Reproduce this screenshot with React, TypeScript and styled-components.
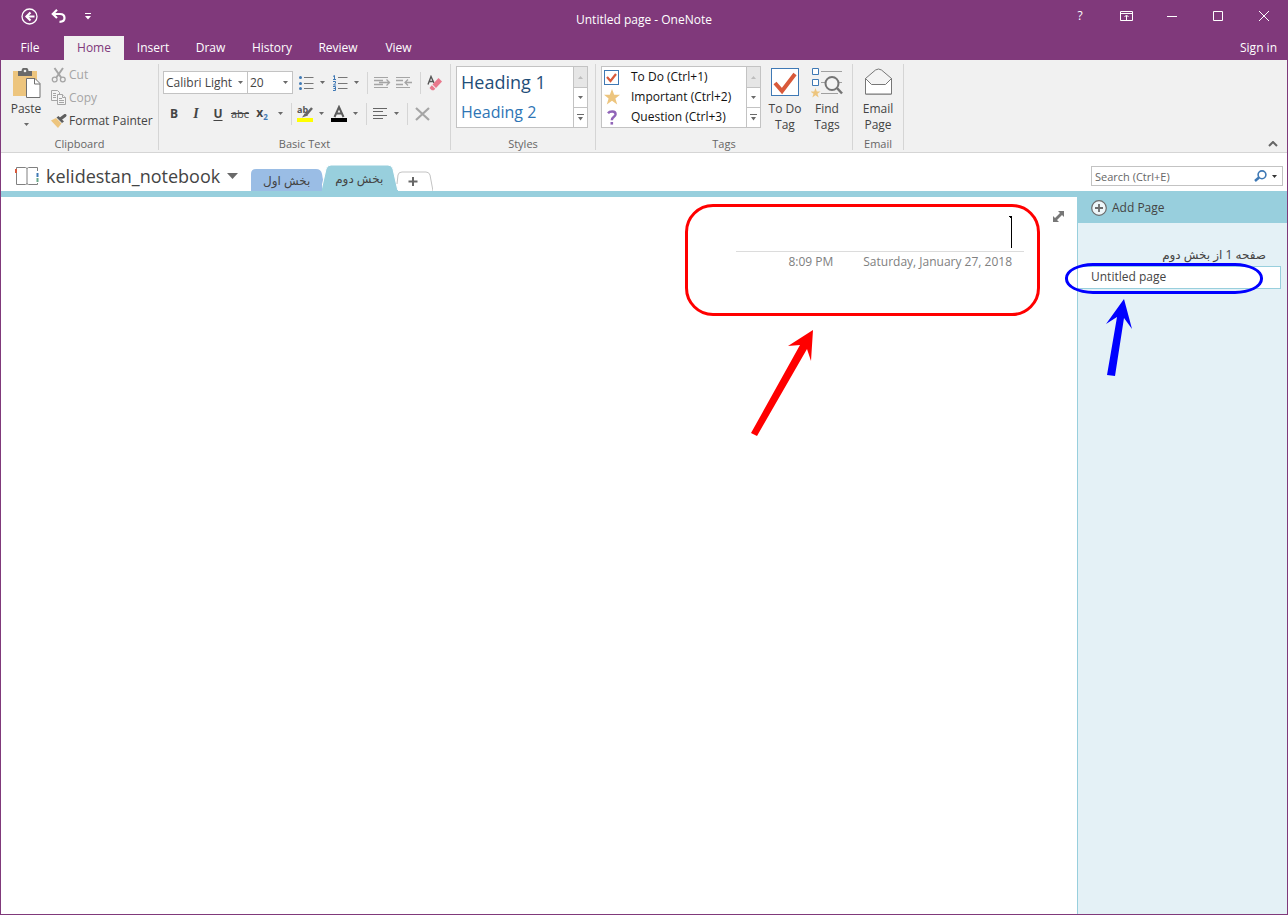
import React from "react";
import styled, { createGlobalStyle, css } from "styled-components";

const color = {
  purple: "#80397b",
  ribbon: "#f1f1f1",
  line: "#d5d5d5",
  box: "#c3c3c3",
  text: "#444444",
  muted: "#a5a5a5",
  label: "#666666",
  icon: "#6a6a6a",
  teal: "#98cfdd",
  pane: "#e4f1f6",
  blue: "#3f79b5",
  sand: "#edc57e",
  coral: "#d9593a",
};

const GlobalStyle = createGlobalStyle`
  *, *::before, *::after { box-sizing: border-box; }
  body {
    margin: 0;
    color: ${color.text};
    font: 12px/16px "Open Sans", "DejaVu Sans", sans-serif;
  }
  button, input, select { font: inherit; color: inherit; }
  button { margin: 0; padding: 0; border: 0; background: none; cursor: pointer; }
  ul { list-style: none; margin: 0; padding: 0; }
  svg { display: block; flex: none; }
`;

const Window = styled.div`
  display: flex;
  flex-direction: column;
  min-height: 100vh;
  border: 1px solid ${color.purple};
  border-top: 0;
  background: #fff;
`;

/* Title bar and ribbon tabs */

const TitleBar = styled.header`
  display: grid;
  grid-template-columns: 1fr auto 1fr;
  height: 36px;
  background: ${color.purple};
  color: #fff;
`;

const QuickAccess = styled.div`
  display: flex;
  align-items: center;
  height: 32px;
  padding-left: 14px;
`;

const QuickButton = styled.button`
  display: flex;
  align-items: center;
  justify-content: center;
  width: 29px;
  height: 28px;
`;

const WindowTitle = styled.h1`
  margin: 0;
  padding-top: 4px;
  font-size: 12px;
  line-height: 32px;
  font-weight: 400;
`;

const WindowControls = styled.div`
  display: flex;
  justify-content: flex-end;
  height: 32px;
`;

const ControlButton = styled.button`
  display: flex;
  align-items: center;
  justify-content: center;
  width: 46px;
  color: #fff;
`;

const TabRow = styled.nav`
  display: flex;
  height: 24px;
  background: ${color.purple};
`;

const RibbonTab = styled.button<{ $width: number; $active?: boolean; $gap?: number }>`
  width: ${(p) => p.$width}px;
  margin-right: ${(p) => p.$gap || 0}px;
  color: #fff;
  ${(p) =>
    p.$active &&
    css`
      background: ${color.ribbon};
      color: ${color.purple};
    `}
`;

const SignIn = styled.button`
  margin-left: auto;
  padding: 0 10px;
  color: #fff;
`;

/* Ribbon */

const Ribbon = styled.section`
  display: flex;
  height: 93px;
  padding-top: 4px;
  border-bottom: 1px solid ${color.line};
  background: ${color.ribbon};
`;

const Group = styled.div<{ $width: number; $inset: number }>`
  display: flex;
  flex-direction: column;
  justify-content: space-between;
  width: ${(p) => p.$width}px;
  height: 86px;
  padding: 2px ${(p) => p.$inset}px 0;
  border-right: 1px solid ${color.line};
`;

const GroupBody = styled.div`
  display: flex;
`;

const GroupLabel = styled.div`
  color: ${color.label};
  font-size: 11px;
  line-height: 12px;
  text-align: center;
`;

const BigButton = styled.button<{ $width: number }>`
  display: flex;
  flex-direction: column;
  align-items: center;
  width: ${(p) => p.$width}px;
  padding-top: 2px;
`;

const BigIcon = styled.span`
  display: block;
  height: 33px;
`;

const BigArrow = styled.span`
  padding-top: 6px;
`;

const ClipboardList = styled.div`
  display: flex;
  flex-direction: column;
  margin-left: 4px;
`;

const SmallButton = styled.button`
  display: flex;
  align-items: center;
  gap: 2px;
  height: 23px;
  padding-bottom: 6px;
  white-space: nowrap;
  &:disabled {
    color: ${color.muted};
    cursor: default;
  }
`;

const ToolRows = styled.div`
  display: flex;
  flex-direction: column;
  gap: 8px;
  padding-top: 5px;
`;

const ToolRow = styled.div`
  display: flex;
  align-items: center;
  gap: 4px;
  height: 23px;
`;

const Cluster = styled.div<{ $gap?: number }>`
  display: flex;
  align-items: center;
  gap: ${(p) => p.$gap || 0}px;
`;

const Divider = styled.span`
  width: 1px;
  height: 22px;
  background: ${color.line};
`;

const ToolButton = styled.button<{ $width?: number }>`
  display: flex;
  align-items: center;
  justify-content: center;
  width: ${(p) => p.$width || 22}px;
  height: 22px;
`;

const Glyph = styled.span<{ $kind: "bold" | "italic" | "underline" | "strike" | "sub" }>`
  font-size: ${(p) => (p.$kind === "strike" ? 11 : 12)}px;
  font-weight: ${(p) => (p.$kind === "strike" ? 400 : 700)};
  ${(p) => p.$kind === "italic" && `font-family: "Liberation Serif", serif; font-style: italic; font-size: 14px;`}
  ${(p) => p.$kind === "underline" && `text-decoration: underline; text-underline-offset: 2px;`}
  ${(p) => p.$kind === "strike" && `text-decoration: line-through;`}
  sub {
    color: ${color.blue};
    font-size: 8px;
    line-height: 8px;
  }
`;

const SelectBox = styled.span<{ $width: number }>`
  display: flex;
  align-items: center;
  width: ${(p) => p.$width}px;
  height: 23px;
  padding-right: 4px;
  border: 1px solid ${color.box};
  background: #fff;
  & + & {
    margin-left: -1px;
  }
`;

const PlainSelect = styled.select`
  flex: 1;
  min-width: 0;
  height: 21px;
  padding: 0 0 0 2px;
  border: 0;
  outline: 0;
  background: transparent;
  appearance: none;
`;

const Gallery = styled.div<{ $width: number }>`
  display: flex;
  width: ${(p) => p.$width}px;
  height: 62px;
  border: 1px solid ${color.box};
  background: #fff;
`;

const GalleryItems = styled.ul`
  flex: 1;
  display: flex;
  flex-direction: column;
`;

const GalleryScroll = styled.div`
  display: grid;
  grid-template-rows: repeat(3, 1fr);
  width: 14px;
  border-left: 1px solid ${color.box};
`;

const ScrollButton = styled.button`
  display: flex;
  align-items: center;
  justify-content: center;
  & + & {
    border-top: 1px solid ${color.box};
  }
  &:disabled {
    background: #e6e6e6;
  }
`;

const StyleItem = styled.button<{ $level: 1 | 2 }>`
  height: 30px;
  padding-left: 4px;
  font-size: ${(p) => (p.$level === 1 ? 18 : 16)}px;
  line-height: 30px;
  color: ${(p) => (p.$level === 1 ? "#1f4e79" : "#2e75b5")};
`;

const TagItem = styled.button`
  display: grid;
  grid-template-columns: 27px auto;
  align-items: center;
  height: 20px;
  padding-left: 2px;
  color: #111;
  white-space: nowrap;
`;

const CollapseButton = styled.button`
  align-self: flex-end;
  margin-left: auto;
  padding: 5px 9px;
`;

/* Notebook bar */

const NotebookBar = styled.div`
  display: flex;
  align-items: flex-end;
  height: 38px;
  padding: 0 4px 0 14px;
`;

const NotebookButton = styled.button`
  display: flex;
  align-items: center;
  gap: 7px;
  height: 30px;
  margin-right: 13px;
  font-size: 18px;
  line-height: 26px;
`;

const SectionTabs = styled.div`
  display: flex;
  align-items: flex-end;
`;

const SectionTab = styled.button<{ $width: number; $height: number }>`
  position: relative;
  width: ${(p) => p.$width}px;
  height: ${(p) => p.$height}px;
  & > svg {
    position: absolute;
    left: 0;
    bottom: 0;
  }
  & > span {
    position: relative;
    display: flex;
    justify-content: center;
    padding-top: 2px;
  }
`;

const SearchBox = styled.label`
  display: flex;
  align-items: center;
  gap: 5px;
  width: 192px;
  height: 20px;
  margin: 0 0 5px auto;
  padding-right: 5px;
  border: 1px solid ${color.box};
`;

const SearchInput = styled.input`
  flex: 1;
  min-width: 0;
  height: 18px;
  padding: 0 0 0 3px;
  border: 0;
  outline: 0;
  background: transparent;
  font-size: 11px;
  &::placeholder {
    color: ${color.label};
    opacity: 1;
  }
`;

/* Page and page list */

const Workspace = styled.div`
  flex: 1;
  display: flex;
  border-top: 6px solid ${color.teal};
`;

const Page = styled.main`
  flex: 1;
  display: flex;
  align-items: flex-start;
  justify-content: flex-end;
  padding: 14px 13px 0 0;
`;

const TitleBlock = styled.div`
  position: relative;
  width: 288px;
  margin-right: 29px;
`;

const TitleField = styled.div`
  display: flex;
  align-items: center;
  height: 41px;
  padding: 5px 12px 3px 0;
  border-bottom: 1px solid #dcdcdc;
`;

const TitleInput = styled.input`
  flex: 1;
  min-width: 0;
  height: 32px;
  padding: 0;
  border: 0;
  outline: 0;
  background: transparent;
  font-size: 20px;
  text-align: right;
`;

const Stamp = styled.div`
  display: flex;
  justify-content: flex-end;
  gap: 30px;
  padding: 2px 12px 0 0;
  color: #808080;
`;

const PageList = styled.aside`
  width: 210px;
  border-left: 1px solid ${color.teal};
  background: ${color.pane};
`;

const AddPage = styled.button`
  display: flex;
  align-items: center;
  gap: 5px;
  width: 100%;
  height: 26px;
  padding: 0 0 4px 13px;
  background: ${color.teal};
`;

const Pages = styled.ul`
  padding: 22px 6px 0 0;
`;

const PageItem = styled.li<{ $current?: boolean }>`
  position: relative;
  height: ${(p) => (p.$current ? 23 : 21)}px;
  ${(p) =>
    p.$current &&
    css`
      border: 1px solid ${color.teal};
      border-left: 0;
      background: #fff;
    `}
`;

const PageLink = styled.a`
  display: block;
  padding: 2px 15px 0 13px;
  color: ${color.text};
  text-decoration: none;
`;

/* Markup drawn over the page */

const Outline = styled.span<{ $tone: "red" | "blue" }>`
  position: absolute;
  border: 3px solid ${(p) => (p.$tone === "red" ? "#ff0000" : "#0000ff")};
  pointer-events: none;
  ${(p) =>
    p.$tone === "red"
      ? css`
          left: -51px;
          top: -7px;
          width: 355px;
          height: 112px;
          border-radius: 28px;
        `
      : css`
          left: -13px;
          top: -4px;
          width: 198px;
          height: 31px;
          border-radius: 28px / 15px;
        `}
`;

const Arrow = styled.svg<{ $left: number; $top: number }>`
  position: absolute;
  left: ${(p) => p.$left}px;
  top: ${(p) => p.$top}px;
  pointer-events: none;
`;

/* Icons */

const Caret = ({ size = 5, fill = color.icon }: { size?: number; fill?: string }) => (
  <svg width={size} height={Math.ceil(size / 2)} viewBox="0 0 10 6" preserveAspectRatio="none" aria-hidden="true">
    <path d="M0 0h10L5 6z" fill={fill} />
  </svg>
);

const BackIcon = () => (
  <svg width="17" height="17" viewBox="0 0 17 17" fill="none" stroke="#fff" aria-hidden="true">
    <circle cx="8.500" cy="8.500" r="7.500" strokeWidth="1.300" />
    <path d="M13.500 8.500H5" strokeWidth="2" />
    <path d="M9.500 4.500 5.500 8.500l4 4" strokeWidth="2.200" />
  </svg>
);

const UndoIcon = () => (
  <svg width="15" height="14" viewBox="0 0 15 14" fill="none" stroke="#fff" strokeWidth="2.200" aria-hidden="true">
    <path d="M2 5h7c3 0 4.500 1.500 4.500 4s-2 3.800-5 3.800" />
    <path d="M6 .8 1.800 5 6 9" />
  </svg>
);

const CustomizeIcon = () => (
  <svg width="6" height="7" viewBox="0 0 6 7" aria-hidden="true">
    <path d="M0 0h6v1H0zM0 3h6L3 6.500z" fill="#fff" />
  </svg>
);

const RibbonDisplayIcon = () => (
  <svg width="13" height="10" viewBox="0 0 13 10" fill="none" stroke="#fff" aria-hidden="true">
    <path d="M.5.5h12v9H.5zM.5 2.500h12M6.500 9V4.500M4.500 6l2-2 2 2" />
  </svg>
);

const PasteIcon = () => (
  <svg width="29" height="30" viewBox="0 0 29 30" aria-hidden="true">
    <path d="M1 3h24v25H1z" fill={color.sand} />
    <path d="M6 3h3.500a3.500 3.500 0 0 1 7 0H20v5H6z" fill="#6a6a6a" />
    <circle cx="13" cy="3" r="1.300" fill="#f1f1f1" />
    <path d="M14.500 10.500h8.500l5 5v14H14.500z" fill="#fff" stroke="#707070" />
    <path d="M22.500 10.500v5.500H28" fill="none" stroke="#707070" />
  </svg>
);

const CutIcon = () => (
  <svg width="16" height="16" viewBox="0 0 16 16" fill="none" stroke={color.muted} aria-hidden="true">
    <path d="M3.500 1 10.500 11M12 1 5 11" strokeWidth="2" />
    <circle cx="3.700" cy="12.500" r="2.400" strokeWidth="1.300" />
    <circle cx="11.800" cy="12.500" r="2.400" strokeWidth="1.300" />
  </svg>
);

const CopyIcon = () => (
  <svg width="16" height="15" viewBox="0 0 16 15" fill="#f4f4f4" stroke={color.muted} aria-hidden="true">
    <path d="M.5.5h6l2 2v8h-8z" />
    <path d="M2 3.500h3M2 5.500h3M2 7.500h3" />
    <path d="M6.500 4.500h5l3 3v7h-8z" />
    <path d="M11.500 4.500v3h3M8 8.500h3M8 10.500h5M8 12.500h5" />
  </svg>
);

const PainterIcon = () => (
  <svg width="16" height="14" viewBox="0 0 16 14" aria-hidden="true">
    <path d="M0 6.500 5 4l5.500 5.500L7 14z" fill={color.sand} />
    <path d="m5.500 3.500 2-1.500 5.500 5.500-2 1.500z" fill="#5e5e5e" />
    <path d="m10 4.500 4-3" stroke="#5e5e5e" strokeWidth="3" strokeLinecap="round" />
  </svg>
);

const ListIcon = ({ numbered }: { numbered?: boolean }) => (
  <svg width="15" height="16" viewBox="0 0 15 16" aria-hidden="true">
    <path d="M5 2.500h9.500M5 8.500h9.500M5 13.500h9.500" stroke="#777" />
    {numbered ? (
      <path
        d="M0 1.500 1.500.5v4M0 4.500h3M0 6.500h2.500v1.500L.5 10H3M0 11.500h2.500v4H0M.5 13.500h2"
        fill="none"
        stroke={color.blue}
      />
    ) : (
      <g fill={color.blue}>
        <circle cx="1.500" cy="2.500" r="1.500" />
        <circle cx="1.500" cy="8.500" r="1.500" />
        <circle cx="1.500" cy="13.500" r="1.500" />
      </g>
    )}
  </svg>
);

const IndentIcon = ({ back }: { back?: boolean }) => (
  <svg width="17" height="11" viewBox="0 0 17 11" fill="none" stroke={color.muted} aria-hidden="true">
    <path d="M0 .5h14M0 10.500h14" />
    {back ? (
      <path d="M0 3.500h7M0 7.500h7M16 5.500H9M12 2.500l-3 3 3 3" strokeWidth="1.300" />
    ) : (
      <path d="M0 3.500h9M0 7.500h9M5 5.500h11M12.500 2.500l3 3-3 3" strokeWidth="1.300" />
    )}
  </svg>
);

const EraserIcon = () => (
  <svg width="16" height="16" viewBox="0 0 16 16" aria-hidden="true">
    <path d="M1 9.500 4 1.500 7 8M2 6.500h4" fill="none" stroke="#555" strokeWidth="1.400" />
    <path d="M11.500 3 15 6.500 9 13 5.500 9.500z" fill="#e8788c" />
    <path d="m4.800 10.200 3.500 3.500-1.500 1.500H4.800L2.500 13z" fill="#e8788c" />
  </svg>
);

const HighlightIcon = () => (
  <svg width="17" height="22" viewBox="0 -2 17 22" aria-hidden="true">
    <text x="0" y="8" fontSize="9" fontWeight="700" fill="#555">
      ab
    </text>
    <path d="m15 3-6 7" stroke="#666" strokeWidth="2.500" />
    <path d="m8 8 3 2.500L5 12.500z" fill="#666" />
    <path d="M0 13h16v4H0z" fill="#ffff00" />
  </svg>
);

const FontColorIcon = () => (
  <svg width="16" height="18" viewBox="0 0 16 18" aria-hidden="true">
    <path d="M3.500 12 8 2 12.500 12M5 8.500h6" fill="none" stroke="#5c5c5c" strokeWidth="2" />
    <path d="M0 13h16v4H0z" fill="#000" />
  </svg>
);

const AlignIcon = () => (
  <svg width="14" height="11" viewBox="0 0 14 11" stroke="#666" aria-hidden="true">
    <path d="M0 .5h14M0 3.500h10M0 7.500h14M0 10.500h10" />
  </svg>
);

const DeleteIcon = () => (
  <svg width="16" height="14" viewBox="0 0 16 14" stroke={color.muted} strokeWidth="2.200" aria-hidden="true">
    <path d="m1 1 13 12M14 1 1 13" />
  </svg>
);

const CheckTagIcon = ({ size }: { size: number }) => (
  <svg width={size} height={size} viewBox={`0 0 ${size} ${size}`} aria-hidden="true">
    <rect x=".5" y=".5" width={size - 1} height={size - 1} fill="#fff" stroke={color.blue} />
    {size > 20 ? (
      <path d="m4 15 7 8L24 6" fill="none" stroke={color.coral} strokeWidth="4" />
    ) : (
      <path d="m3 7 3.500 4L12 4" fill="none" stroke={color.coral} strokeWidth="2.200" />
    )}
  </svg>
);

const StarIcon = () => (
  <svg width="16" height="16" viewBox="0 0 16 16" fill={color.sand} aria-hidden="true">
    <path d="m8 0 2.200 5.800H16l-4.600 3.600L13.200 15.500 8 11.800 2.800 15.500l1.800-6.100L0 5.800h5.800z" />
  </svg>
);

const QuestionIcon = () => (
  <svg width="15" height="15" viewBox="0 0 15 15" aria-hidden="true">
    <path d="M4 3.200C5.500 1.200 11.600.5 11.600 4.200c0 2.600-3.800 2.600-3.800 6" fill="none" stroke="#9064b8" strokeWidth="2.400" />
    <path d="M6.500 12h2.600v2.600H6.500z" fill="#9064b8" />
  </svg>
);

const FindTagsIcon = () => (
  <svg width="32" height="31" viewBox="0 0 32 31" fill="none" aria-hidden="true">
    <path d="M10 3.500h21M10 14.500h4M28 14.500h3M10 25.500h17" stroke="#a0a0a0" />
    <path d="M1.500.5h6v6h-6zM1.500 11.500h6v6h-6z" fill="#fff" stroke={color.blue} />
    <path d="m4.500 20 1.300 3.500h3.700l-3 2.300 1.200 3.700-3.200-2.200-3.200 2.200 1.200-3.700-3-2.300h3.700z" fill={color.sand} />
    <circle cx="21" cy="15.500" r="6.500" fill="#f4f4f4" stroke="#757575" strokeWidth="2" />
    <path d="m26 20 5 5.500" stroke="#757575" strokeWidth="2.500" />
  </svg>
);

const EmailIcon = () => (
  <svg width="27" height="27" viewBox="0 0 27 27" stroke="#777" aria-hidden="true">
    <path d="M.5 10.500 10.500 2q3-2 6 0l10 8.500v15.500H.5z" fill="#f4f4f4" />
    <path d="m.5 10.500 6 6h14l6-6v15.500H.5z" fill="#fff" />
  </svg>
);

const NotebookIcon = () => (
  <svg width="24" height="20" viewBox="0 0 24 20" fill="none" stroke="#808080" aria-hidden="true">
    <path d="M1.500 3V1.500h9l1.500 1 1.500-1h9V5M1.500 7v11.500h9l1.500-.7 1.500.7h9V17M12 2.500V18" />
    <path d="M1 3v4" stroke={color.coral} strokeWidth="2" />
    <path d="M22.500 7v4" stroke={color.blue} strokeWidth="2" />
    <path d="M22.500 12v4" stroke="#6aa88a" strokeWidth="2" />
  </svg>
);

const SearchIcon = () => (
  <svg width="13" height="12" viewBox="0 0 13 12" fill="none" stroke={color.blue} aria-hidden="true">
    <circle cx="8" cy="4.800" r="3.900" strokeWidth="1.600" />
    <path d="M5 7.500 1 11" strokeWidth="2.500" />
  </svg>
);

const AddIcon = () => (
  <svg width="16" height="16" viewBox="0 0 16 16" stroke="#6c6c6c" aria-hidden="true">
    <circle cx="8" cy="8" r="7.300" fill="#eef6f9" strokeWidth="1.200" />
    <path d="M4 8h8M8 4v8" strokeWidth="1.800" />
  </svg>
);

const ExpandIcon = () => (
  <svg width="11" height="11" viewBox="0 0 11 11" fill="#777" aria-hidden="true">
    <path d="M5 0h6v6L9 4 4 9l2 2H0V5l2 2 5-5z" />
  </svg>
);

const TextCursor = () => (
  <svg width="3" height="32" viewBox="0 0 3 32" aria-hidden="true">
    <path d="M0 0h3v32H2V2H1V1H0z" fill="#000" />
  </svg>
);

const Scroller = ({ name }: { name: string }) => (
  <GalleryScroll>
    <ScrollButton disabled aria-label={`${name}: previous row`}>
      <svg width="5" height="3" viewBox="0 0 5 3" aria-hidden="true">
        <path d="M0 3h5L2.500 0z" fill="#bdbdbd" />
      </svg>
    </ScrollButton>
    <ScrollButton aria-label={`${name}: next row`}>
      <Caret />
    </ScrollButton>
    <ScrollButton aria-label={`${name}: more`}>
      <svg width="7" height="7" viewBox="0 0 7 7" aria-hidden="true">
        <path d="M0 0h7v1H0zM1 3h5L3.500 6.500z" fill={color.icon} />
      </svg>
    </ScrollButton>
  </GalleryScroll>
);

const SplitTool = ({ name, width = 18, children }: { name: string; width?: number; children: React.ReactNode }) => (
  <Cluster>
    <ToolButton $width={width} aria-label={name}>
      {children}
    </ToolButton>
    <ToolButton $width={14} aria-label={`${name} options`}>
      <Caret />
    </ToolButton>
  </Cluster>
);

const tabs = [
  { name: "File", width: 58, gap: 5 },
  { name: "Home", width: 60, active: true },
  { name: "Insert", width: 58 },
  { name: "Draw", width: 57 },
  { name: "History", width: 66 },
  { name: "Review", width: 66 },
  { name: "View", width: 55 },
];

export default function App() {
  return (
    <>
      <GlobalStyle />
      <Window>
        <TitleBar>
          <QuickAccess>
            <QuickButton aria-label="Back"><BackIcon /></QuickButton>
            <QuickButton aria-label="Undo"><UndoIcon /></QuickButton>
            <QuickButton aria-label="Customize Quick Access Toolbar"><CustomizeIcon /></QuickButton>
          </QuickAccess>
          <WindowTitle>Untitled page - OneNote</WindowTitle>
          <WindowControls>
            <ControlButton aria-label="Help">?</ControlButton>
            <ControlButton aria-label="Ribbon display options"><RibbonDisplayIcon /></ControlButton>
            <ControlButton aria-label="Minimize">
              <svg width="10" height="1" aria-hidden="true"><path d="M0 0h10v1H0z" fill="#fff" /></svg>
            </ControlButton>
            <ControlButton aria-label="Maximize">
              <svg width="10" height="10" aria-hidden="true"><path d="M.5.5h9v9h-9z" fill="none" stroke="#fff" /></svg>
            </ControlButton>
            <ControlButton aria-label="Close">
              <svg width="10" height="10" aria-hidden="true"><path d="m0 0 10 10M10 0 0 10" stroke="#fff" /></svg>
            </ControlButton>
          </WindowControls>
        </TitleBar>

        <TabRow aria-label="Ribbon">
          {tabs.map((t) => (
            <RibbonTab key={t.name} $width={t.width} $active={t.active} $gap={t.gap}>{t.name}</RibbonTab>
          ))}
          <SignIn>Sign in</SignIn>
        </TabRow>

        <Ribbon>
          <Group $width={158} $inset={4}>
            <GroupBody>
              <BigButton $width={42}>
                <BigIcon><PasteIcon /></BigIcon>
                Paste
                <BigArrow><Caret /></BigArrow>
              </BigButton>
              <ClipboardList>
                <SmallButton disabled><CutIcon />Cut</SmallButton>
                <SmallButton disabled><CopyIcon />Copy</SmallButton>
                <SmallButton><PainterIcon />Format Painter</SmallButton>
              </ClipboardList>
            </GroupBody>
            <GroupLabel>Clipboard</GroupLabel>
          </Group>

          <Group $width={292} $inset={4}>
            <ToolRows>
              <ToolRow>
                <Cluster>
                  <SelectBox $width={85}>
                    <PlainSelect aria-label="Font" defaultValue="Calibri Light"><option>Calibri Light</option></PlainSelect>
                    <Caret />
                  </SelectBox>
                  <SelectBox $width={46}>
                    <PlainSelect aria-label="Font size" defaultValue="20"><option>20</option></PlainSelect>
                    <Caret />
                  </SelectBox>
                </Cluster>
                <Cluster $gap={2}>
                  <SplitTool name="Bullets"><ListIcon /></SplitTool>
                  <SplitTool name="Numbering"><ListIcon numbered /></SplitTool>
                </Cluster>
                <Divider />
                <Cluster>
                  <ToolButton aria-label="Increase indent"><IndentIcon /></ToolButton>
                  <ToolButton aria-label="Decrease indent"><IndentIcon back /></ToolButton>
                </Cluster>
                <Divider />
                <ToolButton aria-label="Clear formatting"><EraserIcon /></ToolButton>
              </ToolRow>
              <ToolRow>
                <Cluster>
                  <ToolButton aria-label="Bold"><Glyph $kind="bold">B</Glyph></ToolButton>
                  <ToolButton aria-label="Italic"><Glyph $kind="italic">I</Glyph></ToolButton>
                  <ToolButton aria-label="Underline"><Glyph $kind="underline">U</Glyph></ToolButton>
                  <ToolButton aria-label="Strikethrough"><Glyph $kind="strike">abc</Glyph></ToolButton>
                  <SplitTool name="Subscript" width={22}><Glyph $kind="sub">x<sub>2</sub></Glyph></SplitTool>
                </Cluster>
                <Divider />
                <Cluster $gap={2}>
                  <SplitTool name="Text highlight color"><HighlightIcon /></SplitTool>
                  <SplitTool name="Font color"><FontColorIcon /></SplitTool>
                </Cluster>
                <Divider />
                <SplitTool name="Paragraph alignment"><AlignIcon /></SplitTool>
                <Divider />
                <ToolButton aria-label="Delete"><DeleteIcon /></ToolButton>
              </ToolRow>
            </ToolRows>
            <GroupLabel>Basic Text</GroupLabel>
          </Group>

          <Group $width={145} $inset={5}>
            <Gallery $width={132}>
              <GalleryItems>
                <li><StyleItem $level={1}>Heading 1</StyleItem></li>
                <li><StyleItem $level={2}>Heading 2</StyleItem></li>
              </GalleryItems>
              <Scroller name="Styles" />
            </Gallery>
            <GroupLabel>Styles</GroupLabel>
          </Group>

          <Group $width={257} $inset={5}>
            <GroupBody>
              <Gallery $width={160}>
                <GalleryItems>
                  <li><TagItem><CheckTagIcon size={15} />To Do (Ctrl+1)</TagItem></li>
                  <li><TagItem><StarIcon />Important (Ctrl+2)</TagItem></li>
                  <li><TagItem><QuestionIcon />Question (Ctrl+3)</TagItem></li>
                </GalleryItems>
                <Scroller name="Tags" />
              </Gallery>
              <BigButton $width={48}>
                <BigIcon><CheckTagIcon size={28} /></BigIcon>
                To Do<br />Tag
              </BigButton>
              <BigButton $width={36}>
                <BigIcon><FindTagsIcon /></BigIcon>
                Find<br />Tags
              </BigButton>
            </GroupBody>
            <GroupLabel>Tags</GroupLabel>
          </Group>

          <Group $width={51} $inset={4}>
            <BigButton $width={42}>
              <BigIcon><EmailIcon /></BigIcon>
              Email<br />Page
            </BigButton>
            <GroupLabel>Email</GroupLabel>
          </Group>

          <CollapseButton aria-label="Collapse the ribbon">
            <svg width="10" height="6" viewBox="0 0 10 6" fill="none" stroke="#666" strokeWidth="2" aria-hidden="true">
              <path d="m1 5 4-4 4 4" />
            </svg>
          </CollapseButton>
        </Ribbon>

        <NotebookBar>
          <NotebookButton>
            <NotebookIcon />
            kelidestan_notebook
            <Caret size={11} />
          </NotebookButton>
          <SectionTabs>
            <SectionTab $width={71} $height={22}>
              <svg width="76" height="22" viewBox="0 0 76 22" aria-hidden="true">
                <path d="M0 22V5q0-5 5-5h60q5 0 6 5l3 17z" fill="#9abde5" />
              </svg>
              <span lang="fa" dir="rtl">بخش اول</span>
            </SectionTab>
            <SectionTab $width={74} $height={26}>
              <svg width="77" height="26" viewBox="0 0 77 26" aria-hidden="true">
                <path d="M-1 26 4 4q1-4 5-4h57q4 0 5 4l5 22z" fill={color.teal} stroke="#fff" />
                <path d="M0 25h76v1H0z" fill={color.teal} />
              </svg>
              <span lang="fa" dir="rtl">بخش دوم</span>
            </SectionTab>
            <SectionTab $width={37} $height={20} aria-label="Create a new section">
              <svg width="37" height="20" viewBox="0 0 37 20" fill="none" aria-hidden="true">
                <path d="m1 13 1-9Q2.500 1 6 1h24q3 0 4 3l3 16" stroke="#c3c3c3" />
                <path d="M12.500 10.500h9M17 6v9" stroke="#666" strokeWidth="2" />
              </svg>
            </SectionTab>
          </SectionTabs>
          <SearchBox>
            <SearchInput type="search" aria-label="Search" placeholder="Search (Ctrl+E)" />
            <SearchIcon />
            <Caret fill="#333" />
          </SearchBox>
        </NotebookBar>

        <Workspace>
          <Page>
            <TitleBlock>
              <TitleField>
                <TitleInput aria-label="Page title" dir="rtl" />
                <TextCursor />
              </TitleField>
              <Stamp>
                <time>8:09 PM</time>
                <time dateTime="2018-01-27">Saturday, January 27, 2018</time>
              </Stamp>
              <Outline $tone="red" />
              <Arrow $left={13} $top={118} width="66" height="108" viewBox="0 0 66 108" aria-hidden="true">
                <path d="M64 1 62 32l-4-12L8 107l-6-3L51 16l-12 1z" fill="#ff0000" />
              </Arrow>
            </TitleBlock>
            <button aria-label="Full page view"><ExpandIcon /></button>
          </Page>

          <PageList>
            <AddPage><AddIcon />Add Page</AddPage>
            <Pages>
              <PageItem dir="rtl" lang="fa"><PageLink href="#page-1">صفحه 1 از بخش دوم</PageLink></PageItem>
              <PageItem $current>
                <PageLink href="#untitled">Untitled page</PageLink>
                <Outline $tone="blue" />
                <Arrow $left={27} $top={32} width="28" height="78" viewBox="0 0 28 78" aria-hidden="true">
                  <path d="m19 0 8 30-8-11-9 58-8-1 10-58L1 25z" fill="#0000ff" />
                </Arrow>
              </PageItem>
            </Pages>
          </PageList>
        </Workspace>
      </Window>
    </>
  );
}
